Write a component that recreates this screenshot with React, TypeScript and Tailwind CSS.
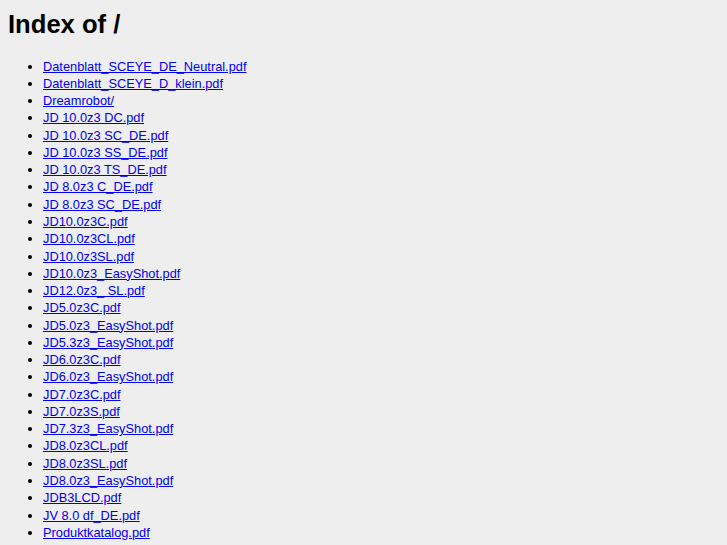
const files = [
  'Datenblatt_SCEYE_DE_Neutral.pdf',
  'Datenblatt_SCEYE_D_klein.pdf',
  'Dreamrobot/',
  'JD 10.0z3 DC.pdf',
  'JD 10.0z3 SC_DE.pdf',
  'JD 10.0z3 SS_DE.pdf',
  'JD 10.0z3 TS_DE.pdf',
  'JD 8.0z3 C_DE.pdf',
  'JD 8.0z3 SC_DE.pdf',
  'JD10.0z3C.pdf',
  'JD10.0z3CL.pdf',
  'JD10.0z3SL.pdf',
  'JD10.0z3_EasyShot.pdf',
  'JD12.0z3_ SL.pdf',
  'JD5.0z3C.pdf',
  'JD5.0z3_EasyShot.pdf',
  'JD5.3z3_EasyShot.pdf',
  'JD6.0z3C.pdf',
  'JD6.0z3_EasyShot.pdf',
  'JD7.0z3C.pdf',
  'JD7.0z3S.pdf',
  'JD7.3z3_EasyShot.pdf',
  'JD8.0z3CL.pdf',
  'JD8.0z3SL.pdf',
  'JD8.0z3_EasyShot.pdf',
  'JDB3LCD.pdf',
  'JV 8.0 df_DE.pdf',
  'Produktkatalog.pdf',
  'Video Monitor Multi_DE.pdf',
];

export default function App() {
  return (
    <div className="min-h-[545px] bg-[#eeeeee] px-2 pt-[12px] font-['Liberation_Sans',Arial,sans-serif] text-black">
      <h1 className="text-[25.6px] font-bold leading-none">Index of /</h1>
      <ul className="mt-[20px] list-disc pl-[35px] text-[12.8px] leading-[17.27px]">
        {files.map((f) => (
          <li key={f}>
            <a href="#" className="text-[#0000ee] underline">
              {f}
            </a>
          </li>
        ))}
      </ul>
    </div>
  );
}
